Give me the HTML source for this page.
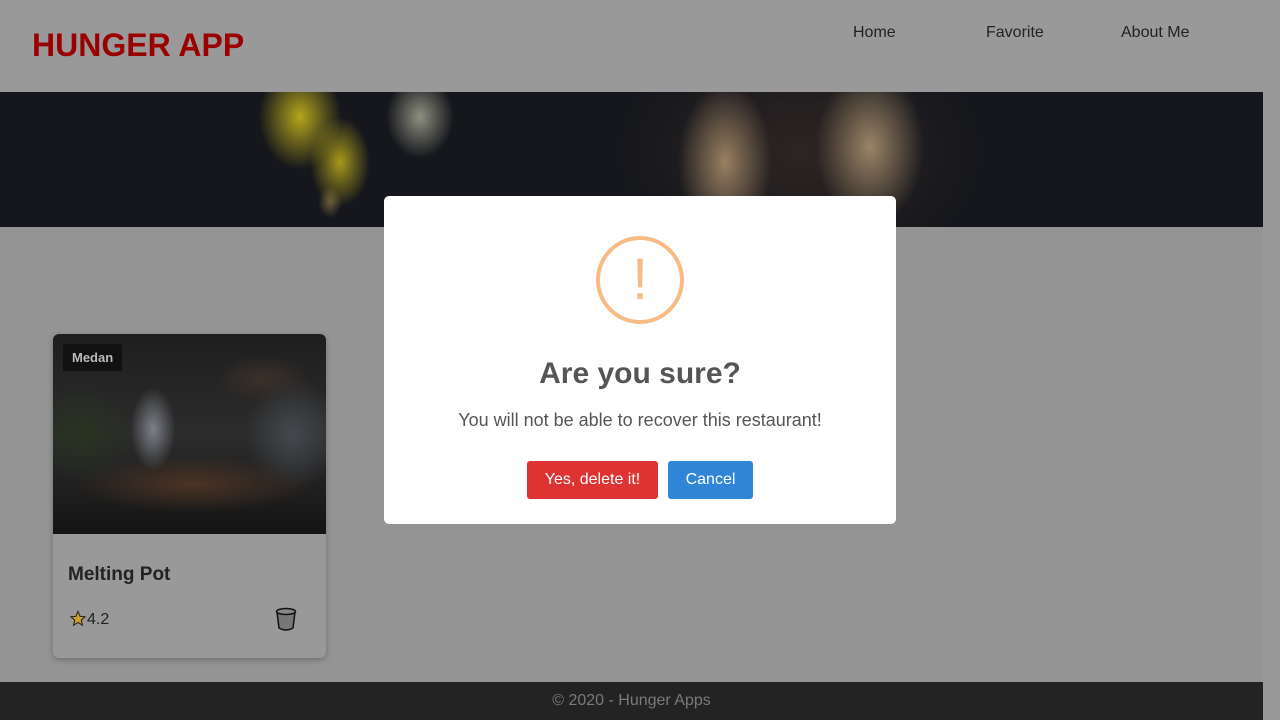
<!DOCTYPE html>
<html><head><style>
*{margin:0;padding:0;box-sizing:border-box}
body{width:1280px;height:720px;background:#949494;font-family:"Liberation Sans",sans-serif;position:relative;overflow:hidden}
.sb{position:absolute;left:1263px;top:0;width:17px;height:720px;background:#999}
header{position:absolute;left:0;top:0;width:1263px;height:92px;background:#999;box-shadow:0 1px 3px rgba(0,0,0,.2)}
.logo{position:absolute;left:32px;top:27px;font-size:32px;font-weight:bold;color:#9a0000}
nav a{position:absolute;top:24px;font-size:16px;color:#222;text-decoration:none}
.hero{position:absolute;left:0;top:92px;width:1263px;height:135px;background:
radial-gradient(ellipse 55px 70px at 300px 25px,#b5a51c,transparent 75%),
radial-gradient(ellipse 40px 60px at 340px 70px,#a8981a,transparent 75%),
radial-gradient(ellipse 45px 55px at 420px 25px,#8f8f80,transparent 75%),
radial-gradient(ellipse 15px 20px at 330px 110px,#6b5a3d,transparent 80%),
radial-gradient(ellipse 65px 110px at 725px 70px,#998062,transparent 72%),
radial-gradient(ellipse 75px 110px at 870px 55px,#9a8466,transparent 72%),
radial-gradient(ellipse 230px 160px at 800px 60px,#2d2423,transparent 80%),
#15171c}
.card{position:absolute;left:53px;top:334px;width:273px;height:324px;background:#999;border-radius:6px;box-shadow:0 2px 6px rgba(0,0,0,.25);overflow:hidden}
.img{height:200px;background:
radial-gradient(ellipse 30px 55px at 100px 95px,#7c8088,transparent 75%),
radial-gradient(ellipse 150px 35px at 140px 150px,#4a3324,transparent 80%),
radial-gradient(ellipse 60px 30px at 210px 45px,#3b3129,transparent 80%),
radial-gradient(ellipse 60px 70px at 240px 100px,#44484d,transparent 80%),
radial-gradient(ellipse 60px 60px at 30px 100px,#27331f,transparent 80%),
linear-gradient(#1e1e1e,#2c2c2c 50%,#141414)}
.tag{position:absolute;left:10px;top:10px;background:#111;color:#bbb;font-size:13px;font-weight:bold;padding:6px 9px}
.name{position:absolute;left:15px;top:230px;font-size:19px;font-weight:bold;color:#222}
.rate{position:absolute;left:16px;top:276px;font-size:16px;color:#222}
.modal{position:absolute;left:384px;top:196px;width:512px;height:328px;background:#fff;border-radius:5px;text-align:center}
.ic{position:absolute;left:212px;top:40px;width:88px;height:88px;border:4px solid #f8bb86;border-radius:50%;color:#f8bb86;font-size:58px;line-height:80px}
.t{position:absolute;left:0;width:100%;top:161px;font-size:30px;font-weight:bold;color:#555}
.m{position:absolute;left:0;width:100%;top:214px;font-size:18px;color:#555}
.b{position:absolute;top:265px;height:38px;color:#fff;font-size:16px;line-height:38px;border-radius:3px}
footer{position:absolute;left:0;top:682px;width:1263px;height:38px;background:#232323;color:#7a7a7a;text-align:center;font-size:16px;line-height:38px}
</style></head><body>
<header><div class="logo">HUNGER APP</div>
<nav><a style="left:853px">Home</a><a style="left:986px">Favorite</a><a style="left:1121px">About Me</a></nav></header>
<div class="sb"></div>
<div class="hero"></div>
<div class="card"><div class="img"></div><div class="tag">Medan</div>
<div class="name">Melting Pot</div>
<div class="rate"><svg width="18" height="17" viewBox="0 0 24 24" style="vertical-align:-3px"><path d="M12 2l3 7 7 .6-5.4 4.7 1.7 7.2L12 17.6 5.7 21.5l1.7-7.2L2 9.6 9 9z" fill="#c9a227" stroke="#222" stroke-width="1.5"/></svg>4.2</div>
<svg style="position:absolute;left:222px;top:273px" width="22" height="24" viewBox="0 0 22 24"><path d="M2 5 L4 21 Q11 25 18 21 L20 5" fill="#777" stroke="#111" stroke-width="1.5"/><ellipse cx="11" cy="4.5" rx="9.5" ry="3" fill="#888" stroke="#111" stroke-width="1.5"/></svg>
</div>
<div class="modal"><div class="ic">!</div><div class="t">Are you sure?</div>
<div class="m">You will not be able to recover this restaurant!</div>
<div class="b" style="left:143px;width:131px;background:#dd3333">Yes, delete it!</div>
<div class="b" style="left:284px;width:85px;background:#3085d6">Cancel</div></div>
<footer>© 2020 - Hunger Apps</footer>
</body></html>
